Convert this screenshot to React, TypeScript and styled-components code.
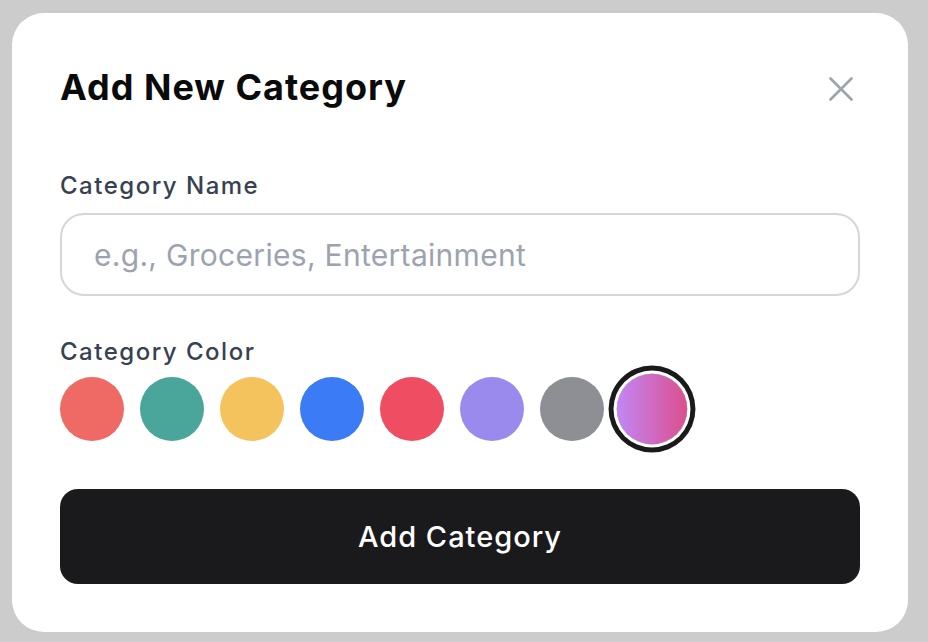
import React, { useState } from 'react'
import styled, { createGlobalStyle } from 'styled-components'

const GlobalStyle = createGlobalStyle`
    * { box-sizing: border-box; }
    html, body {
        margin: 0;
        padding: 0;
        background: #cccccc;
        font-family: 'Inter', 'Noto Sans', sans-serif;
    }
`

//Swatch colours, last one is a gradient
const COLORS: Array<string> = [
    '#ef6a65',
    '#4aa59b',
    '#f5c35e',
    '#3b7bf6',
    '#ee4d62',
    '#9b8aee',
    '#8e8f94',
    'linear-gradient(90deg, #c287f5 0%, #db4f8e 100%)',
]

const App: React.FC = () => {
    const [name, setName] = useState<string>('')
    const [selected, setSelected] = useState<number>(7)

    return (
        <>
            <GlobalStyle />
            <Card>
                <Header>
                    <Title>Add New Category</Title>
                    <CloseButton aria-label="Close">
                        <svg width="24" height="24" viewBox="0 0 24 24" fill="none">
                            <path d="M1.5 1.5 22.5 22.5M22.5 1.5 1.5 22.5" stroke="#9ca3af" strokeWidth="2.6" strokeLinecap="round" />
                        </svg>
                    </CloseButton>
                </Header>

                <Label htmlFor="cat-name">Category Name</Label>
                <Input
                    id="cat-name"
                    placeholder="e.g., Groceries, Entertainment"
                    value={name}
                    onChange={(e) => setName(e.target.value)}
                />

                <ColorLabel>Category Color</ColorLabel>
                <Swatches>
                    {COLORS.map((color, index) => (
                        <Swatch
                            key={index}
                            $color={color}
                            $active={index === selected}
                            onClick={() => setSelected(index)}
                        />
                    ))}
                </Swatches>

                <SubmitButton>Add Category</SubmitButton>
            </Card>
        </>
    )
}

export default App

const Card = styled.div`
    margin: 13px 0 0 12px;
    width: 896px;
    height: 619px;
    background: #ffffff;
    border-radius: 32px;
    padding: 54px 48px 48px;
    display: flex;
    flex-direction: column;
`

const Header = styled.div`
    display: flex;
    align-items: center;
    justify-content: space-between;
    margin-bottom: 63px;
    height: 40px;
`

const Title = styled.h2`
    margin: 0;
    font-size: 36px;
    line-height: 40px;
    font-weight: 700;
    color: #0a0a0a;
    letter-spacing: 1px;
`

const CloseButton = styled.button`
    border: none;
    background: none;
    padding: 4px 0 0;
    margin-right: 7px;
    display: flex;
    cursor: pointer;
`

const Label = styled.label`
    display: block;
    font-size: 24px;
    line-height: 32px;
    font-weight: 500;
    color: #374151;
    letter-spacing: 1.5px;
    margin-bottom: 11px;
`

const ColorLabel = styled(Label)`
    margin-top: 40px;
    margin-bottom: 9px;
`

const Input = styled.input`
    width: 100%;
    height: 83px;
    flex-shrink: 0;
    border: 2px solid #d4d6db;
    border-radius: 24px;
    padding: 0 32px;
    font-family: inherit;
    font-size: 30px;
    letter-spacing: 0.3px;
    color: #111827;
    outline: none;

    &::placeholder {
        color: #9ca3af;
    }
`

const Swatches = styled.div`
    display: flex;
    gap: 16px;
`

const Swatch = styled.button<{ $color: string; $active: boolean }>`
    width: 64px;
    height: 64px;
    flex-shrink: 0;
    border-radius: 50%;
    border: none;
    padding: 0;
    cursor: pointer;
    background: ${(p) => p.$color};
    transform: ${(p) => (p.$active ? 'scale(1.1)' : 'none')};
    box-shadow: ${(p) => (p.$active ? '0 0 0 3px #ffffff, 0 0 0 7.5px #1a1a1a' : 'none')};
`

const SubmitButton = styled.button`
    margin-top: 48px;
    width: 100%;
    height: 95px;
    flex-shrink: 0;
    border: none;
    border-radius: 18px;
    background: #1a1a1c;
    color: #ffffff;
    font-family: inherit;
    font-size: 29px;
    font-weight: 500;
    letter-spacing: 1px;
    cursor: pointer;
`
